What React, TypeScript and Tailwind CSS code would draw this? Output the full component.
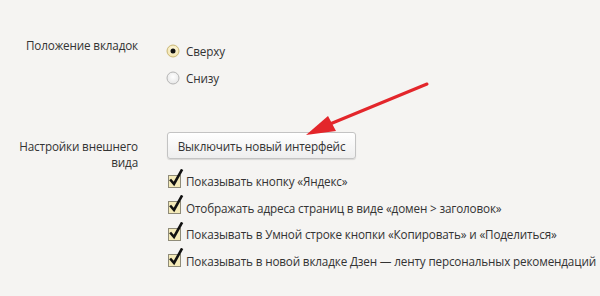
import React from "react";

function Radio({ checked }: { checked?: boolean }) {
  return (
    <svg width="14" height="14" viewBox="0 0 14 14" className="shrink-0">
      <defs>
        <radialGradient id={checked ? "rg1" : "rg2"} cx="50%" cy="40%" r="60%">
          <stop offset="0%" stopColor={checked ? "#fffbe8" : "#ffffff"} />
          <stop offset="100%" stopColor={checked ? "#f1e2a8" : "#e6e6e6"} />
        </radialGradient>
      </defs>
      <circle cx="7" cy="7" r="6" fill={`url(#${checked ? "rg1" : "rg2"})`} stroke={checked ? "#c9b777" : "#b5b5b5"} strokeWidth="1" />
      {checked && <circle cx="7" cy="7" r="2.5" fill="#111" />}
    </svg>
  );
}

function Check() {
  return (
    <svg width="17" height="19" viewBox="0 0 17 19" className="shrink-0 -mt-[6px]">
      <rect x="1.5" y="6.5" width="12" height="12" fill="#f4eab8" stroke="#8f8b78" strokeWidth="1" />
      <path d="M4 11.5 L7 15 L14.5 1.5" fill="none" stroke="#111" strokeWidth="2.6" strokeLinecap="square" />
    </svg>
  );
}

const checks = [
  "Показывать кнопку «Яндекс»",
  "Отображать адреса страниц в виде «домен > заголовок»",
  "Показывать в Умной строке кнопки «Копировать» и «Поделиться»",
  "Показывать в новой вкладке Дзен — ленту персональных рекомендаций",
];

export default function App() {
  return (
    <div
      className="relative w-[600px] h-[296px] overflow-hidden bg-[#f5f4f2] text-[#333333] text-[11.7px] leading-[16px] tracking-[-0.15px]"
      style={{ fontFamily: '"Open Sans", "Noto Sans", sans-serif' }}
    >
      <div className="flex pt-[37px]">
        <div className="w-[138px] shrink-0 text-right whitespace-nowrap">Положение вкладок</div>
        <div className="ml-[28px] flex flex-col gap-[11px] pt-[6px]">
          <div className="flex items-center gap-[6px]">
            <Radio checked />
            <span>Сверху</span>
          </div>
          <div className="flex items-center gap-[6px]">
            <Radio />
            <span>Снизу</span>
          </div>
        </div>
      </div>

      <div className="flex pt-[46px]">
        <div className="w-[138px] shrink-0 text-right pt-[6px] leading-[16px] whitespace-nowrap">
          Настройки внешнего
          <br />
          вида
        </div>
        <div className="ml-[29px] flex flex-col">
          <button className="w-[189px] h-[27px] rounded-[3px] border border-[#c3c3c3] bg-gradient-to-b from-[#ffffff] to-[#eeeeee] text-[#333] shadow-[0_1px_1px_rgba(0,0,0,0.12)]">
            Выключить новый интерфейс
          </button>
          <div className="flex flex-col gap-[10.5px] pt-[14px]">
            {checks.map((c) => (
              <div key={c} className="flex items-center gap-[2px] whitespace-nowrap">
                <Check />
                <span>{c}</span>
              </div>
            ))}
          </div>
        </div>
      </div>

      <svg className="absolute left-0 top-0" width="600" height="296" viewBox="0 0 600 296">
        <line x1="427" y1="84" x2="330" y2="124" stroke="#e3262b" strokeWidth="3" strokeLinecap="round" />
        <polygon points="306,135 328,116 336,131" fill="#e3262b" />
      </svg>
    </div>
  );
}
